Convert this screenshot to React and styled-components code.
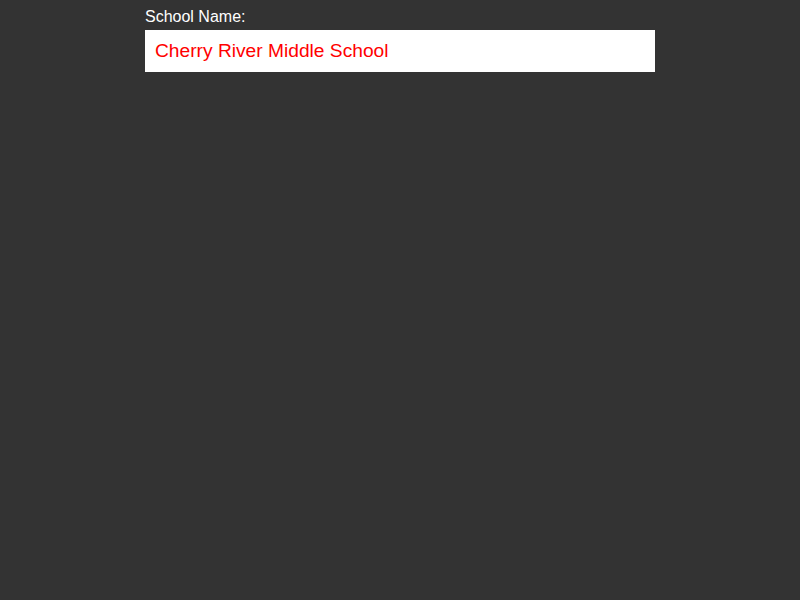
import React, { useState } from "react";
import styled, { createGlobalStyle } from "styled-components";

const GlobalStyle = createGlobalStyle`
  html, body {
    margin: 0;
    padding: 0;
    background: #333333;
    font-family: "Liberation Sans", Arial, sans-serif;
  }
`;

const Page = styled.div`
  min-height: 100vh;
  display: flex;
  justify-content: center;
`;

const Field = styled.div`
  width: 510px;
  padding-top: 7px;
  display: flex;
  flex-direction: column;
  gap: 4px;
`;

const Label = styled.label`
  color: #ffffff;
  font-size: 16px;
  line-height: 19px;
`;

const Input = styled.input`
  box-sizing: border-box;
  width: 100%;
  height: 42px;
  padding: 0 10px;
  border: none;
  outline: none;
  background: #ffffff;
  color: #ff0000;
  font-family: "Liberation Sans", Arial, sans-serif;
  font-size: 19.2px;
`;

const App = () => {
  const [name, setName] = useState("Cherry River Middle School");

  return (
    <>
      <GlobalStyle />
      <Page>
        <Field>
          <Label htmlFor="school">School Name:</Label>
          <Input id="school" value={name} onChange={(e) => setName(e.target.value)} />
        </Field>
      </Page>
    </>
  );
};

export default App;
